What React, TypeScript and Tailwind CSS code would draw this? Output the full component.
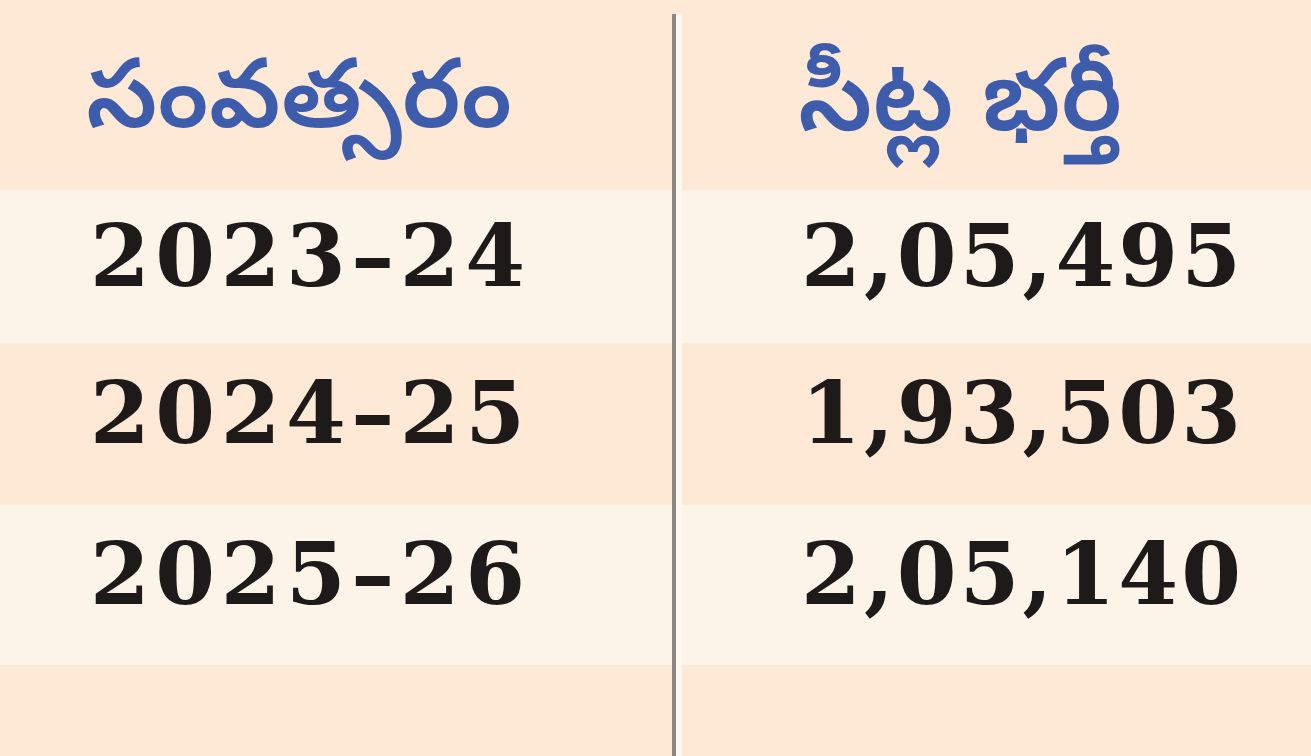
import React from "react";

const rows = [
  { year: "2023–24", seats: "2,05,495", light: true, h: "h-[153px]" },
  { year: "2024–25", seats: "1,93,503", light: false, h: "h-[162px]" },
  { year: "2025–26", seats: "2,05,140", light: true, h: "h-[160px]" },
];

const numFont = { fontFamily: '"DejaVu Serif", "Liberation Serif", serif' };
const teluguFont = { fontFamily: '"Noto Sans Telugu", "Noto Sans", "DejaVu Sans", sans-serif' };

export default function App() {
  return (
    <div className="w-[1311px] h-[756px] bg-[#fde9d5] flex overflow-hidden">
      <div className="w-[672px] flex flex-col">
        <div className="h-[190px] flex items-center pl-[86px] pt-[28px]">
          <span className="text-[#3d5cac] text-[96px] font-semibold leading-none" style={teluguFont}>
            సంవత్సరం
          </span>
        </div>
        {rows.map((r) => (
          <div
            key={r.year}
            className={`${r.h} flex items-center pl-[90px] pb-[22px] ${r.light ? "bg-[#fdf4e9]" : "bg-[#fde9d5]"}`}
          >
            <span className="text-[#1e1a1a] text-[86px] font-bold leading-none tracking-[5.5px]" style={numFont}>
              {r.year}
            </span>
          </div>
        ))}
      </div>
      <div className="w-[4px] mt-[14px] bg-[#8e8987]" />
      <div className="w-[6px] mt-[14px] bg-[#fff8ee]" />
      <div className="flex-1 flex flex-col">
        <div className="h-[190px] flex items-center pl-[116px] pt-[32px]">
          <span className="text-[#3d5cac] text-[100px] font-semibold leading-none" style={teluguFont}>
            సీట్ల భర్తీ
          </span>
        </div>
        {rows.map((r) => (
          <div
            key={r.seats}
            className={`${r.h} flex items-center justify-end pr-[70px] pb-[22px] ${r.light ? "bg-[#fdf4e9]" : "bg-[#fde9d5]"}`}
          >
            <span className="text-[#1e1a1a] text-[86px] font-bold leading-none tracking-[3px] mr-[-3px]" style={numFont}>
              {r.seats}
            </span>
          </div>
        ))}
      </div>
    </div>
  );
}
